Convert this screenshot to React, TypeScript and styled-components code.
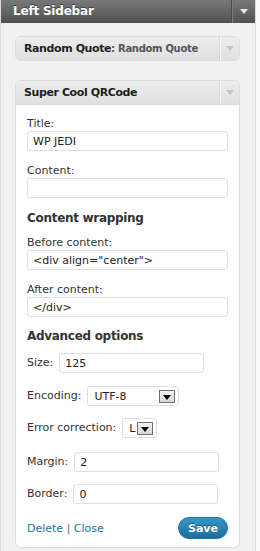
import React from 'react'
import styled, { createGlobalStyle } from 'styled-components'

const GlobalStyle = createGlobalStyle`
  html, body {
    margin: 0;
    padding: 0;
    background: #f9f9f9;
    font-family: "DejaVu Sans", Verdana, sans-serif;
  }
`;

const Sidebar = styled.div`
  width: 254px;
  min-height: 551px;
  background: #f1f1f1;
  border-left: 1px solid #dcdcdc;
  border-right: 1px solid #dcdcdc;
`;

const SidebarHeader = styled.div`
  display: flex;
  align-items: stretch;
  height: 23px;
  background: linear-gradient(#787878, #515151);
`;

const SidebarTitle = styled.h3`
  flex: 1;
  margin: 0;
  padding-left: 12px;
  font-size: 12px;
  line-height: 22px;
  font-weight: bold;
  letter-spacing: -0.2px;
  color: #fff;
  text-shadow: 0 -1px 0 #3f3f3f;
`;

const HeaderToggle = styled.div<{ light?: boolean }>`
  width: ${p => (p.light ? '19px' : '23px')};
  display: flex;
  align-items: center;
  justify-content: center;
  border-left: 1px solid ${p => (p.light ? '#d6d6d6' : '#4b4b4b')};
  box-shadow: inset 1px 0 0 ${p => (p.light ? '#f8f8f8' : '#7c7c7c')};
`;

const Arrow = styled.span<{ color: string }>`
  width: 0;
  height: 0;
  border-left: 4px solid transparent;
  border-right: 4px solid transparent;
  border-top: 5px solid ${p => p.color};
`;

const WidgetList = styled.div`
  display: flex;
  flex-direction: column;
  gap: 19px;
  padding: 13px 15px 3px 14px;
`;

const Widget = styled.div`
  border: 1px solid #dcdcdc;
  border-radius: 6px;
  background: #fff;
  overflow: hidden;
`;

const WidgetTop = styled.div<{ closed?: boolean }>`
  display: flex;
  height: 23px;
  background: linear-gradient(#ececec, #e0e0e0);
  border-bottom: ${p => (p.closed ? 'none' : '1px solid #dcdcdc')};
`;

const WidgetTitle = styled.h4`
  flex: 1;
  margin: 0;
  padding-left: 8px;
  font-size: 11px;
  line-height: 23px;
  font-weight: bold;
  letter-spacing: -0.4px;
  color: #1f1f1f;
  white-space: nowrap;
  overflow: hidden;
`;

const InTitle = styled.span`
  font-size: 10px;
  letter-spacing: -0.3px;
  color: #555;
`;

const WidgetBody = styled.div`
  display: flex;
  flex-direction: column;
  padding: 12px 11px 8px 11px;
`;

const Field = styled.div<{ gap?: number }>`
  display: flex;
  flex-direction: column;
  margin-top: ${p => p.gap ?? 0}px;
`;

const Label = styled.label`
  font-size: 11px;
  line-height: 14px;
  color: #333;
`;

const Input = styled.input<{ w?: number }>`
  box-sizing: border-box;
  width: ${p => (p.w ? `${p.w}px` : '100%')};
  height: 20px;
  margin: 0;
  padding: 0 5px;
  border: 1px solid #dfdfdf;
  border-radius: 3px;
  background: #fff;
  font-family: "DejaVu Sans", Verdana, sans-serif;
  font-size: 11px;
  color: #222;
  outline: none;
`;

const Heading = styled.h5<{ gap: number }>`
  margin: ${p => p.gap}px 0 0;
  font-size: 12px;
  line-height: 16px;
  font-weight: bold;
  letter-spacing: -0.3px;
  color: #333;
`;

const Row = styled.div<{ gap: number }>`
  display: flex;
  align-items: center;
  gap: 6px;
  margin-top: ${p => p.gap}px;
`;

const Select = styled.div<{ w: number }>`
  box-sizing: border-box;
  width: ${p => p.w}px;
  height: 20px;
  display: flex;
  align-items: center;
  justify-content: space-between;
  padding: 0 3px 0 6px;
  border: 1px solid #dfdfdf;
  border-radius: 3px;
  background: #fff;
  font-size: 11px;
  color: #222;
`;

const SelectButton = styled.span`
  box-sizing: border-box;
  width: 16px;
  height: 13px;
  display: flex;
  align-items: flex-end;
  justify-content: center;
  padding-bottom: 2px;
  border: 1px solid #6f6f6f;
  background: linear-gradient(#f2f2f2, #d8d8d8);
`;

const Actions = styled.div`
  display: flex;
  align-items: center;
  justify-content: space-between;
  margin-top: 13px;
`;

const Links = styled.div`
  font-size: 11px;
  color: #666;
  & a {
    color: #21759b;
    text-decoration: none;
  }
`;

const SaveButton = styled.button`
  width: 50px;
  height: 22px;
  padding: 0;
  border: 1px solid #21759b;
  border-radius: 11px;
  background: linear-gradient(#3398c8, #1f6e9a);
  color: #fff;
  font-family: "DejaVu Sans", Verdana, sans-serif;
  font-size: 11px;
  font-weight: bold;
  text-shadow: 0 -1px 0 #1b5a7a;
`;

const DropSelect = ({ value, w }: { value: string; w: number }) => (
  <Select w={w}>
    <span>{value}</span>
    <SelectButton>
      <Arrow color="#000" />
    </SelectButton>
  </Select>
)

export default function App() {
  return (
    <>
      <GlobalStyle />
      <Sidebar>
        <SidebarHeader>
          <SidebarTitle>Left Sidebar</SidebarTitle>
          <HeaderToggle>
            <Arrow color="#e6e6e6" />
          </HeaderToggle>
        </SidebarHeader>
        <WidgetList>
          <Widget>
            <WidgetTop closed>
              <WidgetTitle>
                Random Quote<InTitle>: Random Quote</InTitle>
              </WidgetTitle>
              <HeaderToggle light>
                <Arrow color="#c4c4c4" />
              </HeaderToggle>
            </WidgetTop>
          </Widget>
          <Widget>
            <WidgetTop>
              <WidgetTitle>Super Cool QRCode</WidgetTitle>
              <HeaderToggle light>
                <Arrow color="#c4c4c4" />
              </HeaderToggle>
            </WidgetTop>
            <WidgetBody>
              <Field>
                <Label>Title:</Label>
                <Input defaultValue="WP JEDI" />
              </Field>
              <Field gap={13}>
                <Label>Content:</Label>
                <Input defaultValue="" />
              </Field>
              <Heading gap={12}>Content wrapping</Heading>
              <Field gap={10}>
                <Label>Before content:</Label>
                <Input defaultValue={'<div align="center">'} />
              </Field>
              <Field gap={13}>
                <Label>After content:</Label>
                <Input defaultValue="</div>" />
              </Field>
              <Heading gap={11}>Advanced options</Heading>
              <Row gap={9}>
                <Label>Size:</Label>
                <Input w={145} defaultValue="125" />
              </Row>
              <Row gap={13}>
                <Label>Encoding:</Label>
                <DropSelect value="UTF-8" w={92} />
              </Row>
              <Row gap={12}>
                <Label>Error correction:</Label>
                <DropSelect value="L" w={35} />
              </Row>
              <Row gap={14}>
                <Label>Margin:</Label>
                <Input w={145} defaultValue="2" />
              </Row>
              <Row gap={12}>
                <Label>Border:</Label>
                <Input w={145} defaultValue="0" />
              </Row>
              <Actions>
                <Links>
                  <a href="#">Delete</a> | <a href="#">Close</a>
                </Links>
                <SaveButton>Save</SaveButton>
              </Actions>
            </WidgetBody>
          </Widget>
        </WidgetList>
      </Sidebar>
    </>
  )
}
